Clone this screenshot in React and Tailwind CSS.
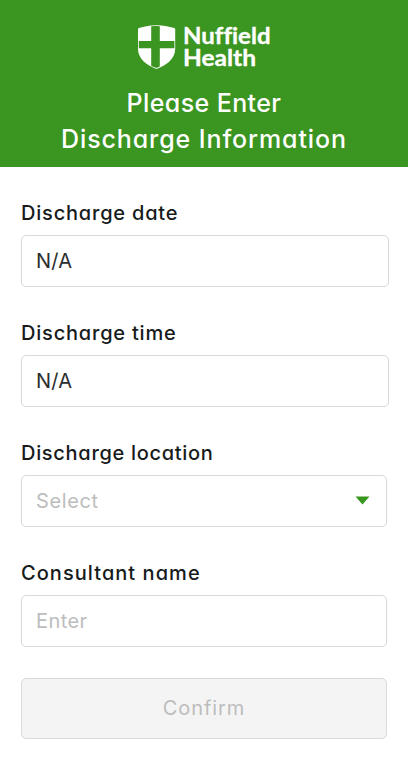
function Logo() {
  return (
    <svg width="140" height="54" viewBox="134 19 140 54" role="img" aria-label="Nuffield Health">
      <path
        d="M156.5 25.2C149 25.3 143 26.4 138 28.6V49C138 59 147 65.5 156.5 69C166 65.5 175.2 59 175.2 49V28.6C170 26.4 164 25.3 156.5 25.2Z"
        fill="#fff"
      />
      <path
        d="M151.2 26.3Q155.5 25.9 159.8 26.3V41H174.4V48.3H159.8V66.6L156.5 68L151.2 66V48.3H138.8V41H151.2Z"
        fill="#3a9521"
      />
      <g fill="#fff" stroke="#fff" strokeWidth="0.35" strokeLinejoin="round" className="font-['Lato'] font-bold [font-variant-ligatures:none]">
        <text x="183" y="44" fontSize="23" textLength="87.5" lengthAdjust="spacingAndGlyphs">Nuffield</text>
        <text x="183" y="65.9" fontSize="23" textLength="73" lengthAdjust="spacingAndGlyphs">Health</text>
      </g>
    </svg>
  );
}

function Field({ label, labelClass, width, value, valueClass, select }) {
  return (
    <div className="flex h-[120px] flex-col">
      <label className={`-mt-[2px] h-[37px] text-[20px] leading-[30px] font-medium whitespace-nowrap text-[#171b1b] ${labelClass}`}>
        {label}
      </label>
      <div className={`flex h-[52px] items-center justify-between rounded-[5px] border border-[#d9d9d9] pr-[16px] pb-px pl-[14px] text-[20px] ${width}`}>
        <span className={valueClass}>{value}</span>
        {select && (
          <svg width="15" height="9" viewBox="0 0 15 9" className="-mt-px">
            <path d="M.5 .5H14.5L7.5 8.5Z" fill="#3a9521" />
          </svg>
        )}
      </div>
    </div>
  );
}

export default function App() {
  return (
    <div className="flex h-[777px] w-[408px] flex-col bg-white font-['Inter',sans-serif] [font-feature-settings:'cv11']">
      <header className="flex h-[167px] flex-col items-center bg-[#3a9521] pt-[19px] text-white">
        <Logo />
        <h1 className="mt-[12px] flex flex-col items-center text-[25px] leading-[36px] font-medium whitespace-nowrap">
          <span className="tracking-[0.4px]">Please Enter</span>
          <span className="tracking-[0.9px]">Discharge Information</span>
        </h1>
      </header>
      <main className="flex flex-col pt-[33px] pl-[21px]">
        <Field label="Discharge date" labelClass="tracking-[0.8px]" width="w-[368px]" value="N/A" valueClass="tracking-[0.2px] text-[#2b2e2e]" />
        <Field label="Discharge time" labelClass="tracking-[0.8px]" width="w-[368px]" value="N/A" valueClass="tracking-[0.2px] text-[#2b2e2e]" />
        <Field label="Discharge location" labelClass="tracking-[0.7px]" width="w-[366px]" value="Select" valueClass="tracking-[0.6px] text-[#bdbdbd]" select />
        <Field label="Consultant name" labelClass="tracking-[1.05px]" width="w-[366px]" value="Enter" valueClass="tracking-[0.4px] text-[#bdbdbd]" />
        <button className="-mt-[2px] h-[61px] w-[366px] rounded-[5px] border border-[#d9d9d9] bg-[#f4f4f4] pb-[2px] text-[20px] tracking-[0.9px] text-[#bdbdbd]">
          Confirm
        </button>
      </main>
    </div>
  );
}
